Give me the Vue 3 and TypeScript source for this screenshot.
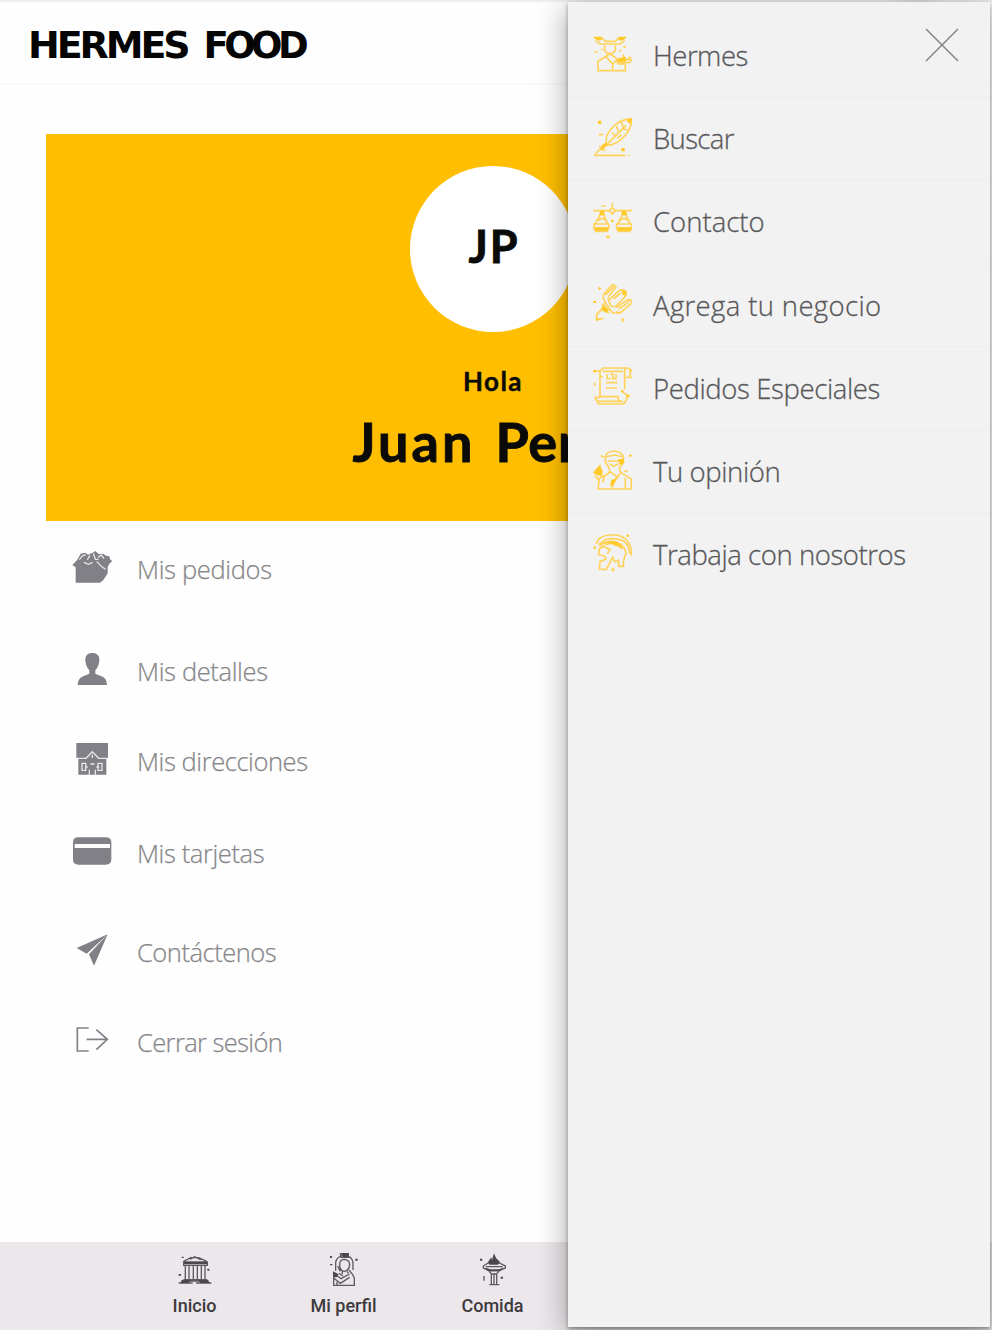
<script setup lang="ts">
import { ref } from 'vue';

interface Icono {
  caja: string
  linea?: string
  relleno?: string
  claro?: string
}

interface Opcion {
  nombre: string
  icono: Icono
  espacio?: string
}

const abierto = ref(true);

const menu: Opcion[] = [
  {
    nombre: 'Hermes',
    espacio: '-0.5px',
    icono: {
      caja: '36 42 120 120',
      linea: 'M42 54H66L76 64H106L116 54H138M46 62L62 72H120L134 62M58 72H122M74 76V92L82 100H96L106 92V76M90 100L80 108L54 124V152H136V132M78 110L98 132V152M98 132L112 118M90 102L108 114L120 130M108 118L128 126L154 112M122 128H148L156 118M106 120L116 132H134M130 80L138 82M44 96H54M64 88L68 90M118 92H124M128 104L136 114M146 110L150 122',
      relleno: 'M40 50H64L66 56L60 62L50 60ZM140 50H118L114 56L120 62L130 60ZM112 116L132 110L140 117L136 124L118 126Z'
    }
  },
  {
    nombre: 'Buscar',
    espacio: '-0.65px',
    icono: {
      caja: '36 297 120 120',
      linea: 'M42 412H136M144 412H148M46 408L80 374M80 378Q72 350 104 322Q124 304 156 302Q154 332 136 352Q112 382 80 382M80 380L138 322M58 384L66 394L76 398M56 350H70M96 344L106 352M112 362L124 350M124 312L132 334L146 336M110 324L114 340',
      relleno: 'M54 308H64V318H54ZM124 390H134V400H124ZM66 380L78 374L82 382L62 400ZM142 303H157L152 318L142 312Z'
    }
  },
  {
    nombre: 'Contacto',
    icono: {
      caja: '36 540 120 120',
      linea: 'M40 572H88M106 572H156M97 548V563M97 563L106 572L97 582L88 572ZM66 574L44 614M66 574L84 614M132 574L112 614M132 574L152 614M42 612H86V626L80 634H48L42 626ZM110 612H154V626L148 634H116L110 626ZM54 602Q66 590 78 602M120 602Q132 590 144 602M48 624H80M116 624H148M64 558H76M78 650H90M84 646V656',
      relleno: 'M92 603L97 598L102 603L97 608ZM60 572H72L74 586H58ZM126 572H138L142 586H124ZM44 622H84V632H46ZM112 622H154V632H114Z'
    }
  },
  {
    nombre: 'Agrega tu negocio',
    espacio: '0.36px',
    icono: {
      caja: '36 44 120 120',
      linea: 'M68 82L94 52Q102 46 108 56L84 86M88 94L116 68Q128 60 138 70Q142 78 134 86L106 116M108 118L144 94Q156 94 156 104L120 134L108 130M68 84L80 110L98 134L124 134M76 80L102 54M100 92L122 74M116 122L148 100M72 104L66 124L88 134M68 120L50 138V156M50 154L70 150M84 90L92 112L104 116M124 154H132M128 150V162',
      relleno: 'M54 60L59 55L64 60L59 65ZM40 98H48V104H40ZM68 106L88 126L78 134L66 124ZM124 68L138 68L136 82L128 80ZM48 148L58 154L50 158Z'
    }
  },
  {
    nombre: 'Pedidos Especiales',
    espacio: '-0.37px',
    icono: {
      caja: '36 292 120 120',
      linea: 'M60 384V306L70 298H142Q158 302 158 314V326H138M138 298Q132 302 134 314V362M40 307H60M68 308H128M60 322L68 326M78 342H112M78 358H112M80 316L82 330H92M90 316H98V330H108V316M60 384H114Q112 398 128 398H54Q46 396 46 386H60M54 406H128Q140 402 140 386L146 382L134 374L124 368M54 398V406M44 342V352M150 304V322',
      relleno: 'M124 364H130V370H124ZM140 378H148V386H140ZM40 304H48V311H40Z'
    }
  },
  {
    nombre: 'Tu opinión',
    espacio: '-0.4px',
    icono: {
      caja: '36 543 120 120',
      linea: 'M76 564Q78 548 102 546Q126 548 130 564L104 558ZM76 564V580L86 594L90 608L82 616L58 628L54 660H154V630L122 610L118 596L130 582V564M82 576H124M88 584L100 592L116 584M62 588L50 600L42 610L58 620M90 608L110 622L94 660M122 612L110 628L98 636M136 626V660M132 606H144M62 560L72 564M74 620L68 640M44 620L56 632',
      relleno: 'M60 590L68 606L66 622L42 614L50 600ZM114 570H132V582L120 588ZM94 632L110 630L100 648L90 652ZM146 560L151 555L156 560L151 565Z'
    }
  },
  {
    nombre: 'Trabaja con nosotros',
    espacio: '-0.43px',
    icono: {
      caja: '36 790 120 120',
      linea: 'M48 824Q56 798 88 796H112Q142 804 152 832L156 856L148 848Q148 826 130 814Q108 804 80 808L56 824M58 830Q78 812 100 816Q134 820 138 850L130 876V890H116V872L104 876L98 862L86 886L78 900L58 898L60 876L78 868L74 860L56 854L58 838L70 830L90 840L82 852M74 824L106 820L128 838M98 824L120 830M50 818L60 804M98 894V906M94 900H104',
      relleno: 'M39 834L44 829L49 834L44 839ZM138 798L143 793L148 798L143 803ZM78 818L102 813L122 826L128 836L104 824Z'
    }
  }
];

const perfil: Opcion[] = [
  {
    nombre: 'Mis pedidos',
    espacio: '-0.33px',
    icono: {
      caja: '96 111 120 120',
      relleno: 'M97 165L112 149L122 131L136 128L144 134L158 128L166 123L176 132L190 131L198 137L208 139L211 149L217 153L208 161L203 171V190L190 210L180 218H107V172Z',
      claro: 'M118 149L128 137L137 135M142 149L150 136M160 130L166 148L176 148M174 142L184 135L192 146M132 157L145 163L158 157M170 154L184 169L196 178'
    }
  },
  {
    nombre: 'Mis detalles',
    espacio: '-0.35px',
    icono: {
      caja: '96 417 120 120',
      relleno: 'M157 429Q176 429 178 446Q179 466 166 481V491L188 500Q200 505 201 525H113Q114 506 126 500L148 491V481Q135 466 136 446Q138 429 157 429Z'
    }
  },
  {
    nombre: 'Mis direcciones',
    espacio: '-0.43px',
    icono: {
      caja: '96 56 120 120',
      relleno: 'M109 68H204V114L199 117V163H115V116L109 112Z',
      claro: 'M109 114H138L157 94L176 114H204M126 129H137V150H126ZM174 129H186V150H174ZM151 131H164M148 148V163M166 148V163M157 103V113M135 140H143M169 140H178'
    }
  },
  {
    nombre: 'Mis tarjetas',
    espacio: '-0.4px',
    icono: {
      caja: '96 331 120 120',
      relleno: 'M115 350H197Q214 350 214 365V416Q214 432 197 432H115Q99 432 99 416V365Q99 350 115 350ZM104 370V382H210V370Z'
    }
  },
  {
    nombre: 'Contáctenos',
    espacio: '-0.47px',
    icono: {
      caja: '96 61 120 120',
      relleno: 'M203 74L110 115L140 132ZM203 74L147 134L162 168Z'
    }
  },
  {
    nombre: 'Cerrar sesión',
    espacio: '-0.62px',
    icono: {
      caja: '96 331 120 120',
      linea: 'M146 355H112V424H146M140 389H202M169 360L202 389L169 420'
    }
  }
];

const barra: Opcion[] = [
  {
    nombre: 'Inicio',
    icono: {
      caja: '86 66 102 102',
      linea: 'M103 94L124 83H148L172 94M103 96V106H174V96ZM108 107V148M119 107V148M132 107V148M144 107V148M156 107V148M167 107V148M102 149H174M96 153H178M88 159H130M140 159H186M122 88L136 80L152 88',
      relleno: 'M104 96H173V103H104ZM97 80H103V84H97ZM88 132H95V137H88ZM174 116H180V122H174ZM98 150H124L118 159H94ZM148 150H174L182 159H152Z'
    }
  },
  {
    nombre: 'Mi perfil',
    icono: {
      caja: '532 66 102 102',
      linea: 'M558 122V96Q562 78 584 76Q608 78 610 98V120M570 104Q570 88 584 88Q600 90 600 104Q598 122 584 124Q570 122 570 104M564 108L572 124M598 120L608 132L614 144V166H552V126M552 128L574 146L600 132M552 144L572 160L600 142M568 130L580 138M562 166V150M572 72H596V82H574ZM578 124V132M592 124L596 130',
      relleno: 'M574 69H598L592 82H580ZM541 78H547V84H541ZM617 86H624V92H617ZM541 102H548V106H541ZM550 124L566 132L562 142H550Z'
    }
  },
  {
    nombre: 'Comida',
    icono: {
      caja: '980 66 102 102',
      linea: 'M1002 108L1018 98H1048L1068 108V114L1050 122H1018L1002 114ZM1010 110H1060M1020 124L1026 132H1042L1048 124M1026 132V162M1034 132V162M1042 132V162M1020 164H1050M1004 138V152',
      relleno: 'M1034 70L1040 84L1052 96L1046 104H1020L1016 96L1026 82L1028 90ZM992 86H999V92H992ZM1054 140H1061V146H1054ZM1006 112L1022 118H1050L1064 112L1052 124H1016Z'
    }
  }
];
</script>

<template>
  <div class="pagina">
    <header class="cabecera">
      <h1 class="logo"><span class="hermes">HERMES</span> <span class="food">FOOD</span></h1>
    </header>

    <main class="contenido">
      <section class="tarjeta">
        <div class="avatar">JP</div>
        <p class="saludo">Hola</p>
        <h2 class="nombre"><span class="pila">Juan</span> <span class="apellido">Perez</span></h2>
      </section>

      <ul class="lista">
        <li v-for="item in perfil" :key="item.nombre">
          <svg :viewBox="item.icono.caja">
            <path class="relleno" fill-rule="evenodd" :d="item.icono.relleno" />
            <path class="claro" :d="item.icono.claro" />
            <path class="linea" :d="item.icono.linea" />
          </svg>
          <span :style="{ letterSpacing: item.espacio }">{{ item.nombre }}</span>
        </li>
      </ul>
    </main>

    <nav class="barra">
      <a v-for="item in barra" :key="item.nombre">
        <svg :viewBox="item.icono.caja">
          <path class="linea" :d="item.icono.linea" />
          <path class="relleno" :d="item.icono.relleno" />
        </svg>
        <span>{{ item.nombre }}</span>
      </a>
    </nav>

    <aside v-if="abierto" class="cajon">
      <ul class="menu">
        <li v-for="item in menu" :key="item.nombre">
          <svg :viewBox="item.icono.caja">
            <path class="linea" :d="item.icono.linea" />
            <path class="relleno" :d="item.icono.relleno" />
          </svg>
          <span :style="{ letterSpacing: item.espacio }">{{ item.nombre }}</span>
        </li>
      </ul>
      <button class="cerrar" @click="abierto = false">
        <svg viewBox="0 0 34 34">
          <path d="M1 1L33 33M33 1L1 33" />
        </svg>
      </button>
    </aside>
    <div class="sombra"></div>
  </div>
</template>

<style>
body {
  margin: 0;
  background: #fff;
}
</style>

<style scoped>
.pagina {
  position: relative;
  display: flex;
  flex-direction: column;
  width: 992px;
  height: 1330px;
  overflow: hidden;
  background: #fefefe;
  font-family: "Open Sans", "Noto Sans", sans-serif;
}

.cabecera {
  box-sizing: border-box;
  height: 85px;
  padding: 22px 28px 0;
  border-top: 2px solid #eee;
  border-bottom: 2px solid #fafafa;
}

.logo {
  display: flex;
  align-items: baseline;
  gap: 16px;
  margin: 0;
  font: 900 38px/42px "DejaVu Sans", sans-serif;
  color: #050505;
}

.hermes {
  letter-spacing: -3.1px;
}

.food {
  font-size: 37px;
  letter-spacing: -4.6px;
}

.contenido {
  flex: 1;
  padding: 49px 52px 0 46px;
}

.tarjeta {
  display: flex;
  flex-direction: column;
  align-items: center;
  box-sizing: border-box;
  height: 387px;
  padding-top: 32px;
  background: #ffbf00;
  color: #0a0a08;
  font-family: Lato, sans-serif;
  font-weight: 700;
}

.avatar {
  display: flex;
  align-items: center;
  justify-content: center;
  box-sizing: border-box;
  width: 166px;
  height: 166px;
  padding: 0 0 6px 2px;
  border-radius: 50%;
  background: #fff;
  font-size: 45px;
  letter-spacing: 2px;
  -webkit-text-stroke: .8px #0a0a08;
}

.saludo {
  margin: 32px 0 0;
  font-size: 26px;
  line-height: 34px;
  letter-spacing: 1.4px;
  -webkit-text-stroke: .4px #0a0a08;
}

.nombre {
  display: flex;
  gap: 20px;
  margin: 12px 0 0;
  font-size: 54px;
  line-height: 64px;
  -webkit-text-stroke: .9px #0a0a08;
}

.pila {
  letter-spacing: 3px;
}

.apellido {
  letter-spacing: .8px;
}

.lista {
  display: grid;
  grid-template-rows: 96px 108px 72px 112px 86px 94px;
  margin: 0;
  padding: 0 0 0 26px;
  list-style: none;
}

.lista li {
  display: flex;
  align-items: center;
  gap: 25px;
  color: #87878a;
  font-size: 25.5px;
  font-weight: 300;
  -webkit-text-stroke: .25px #87878a;
}

.lista svg {
  width: 40px;
  height: 40px;
  margin-bottom: 4px;
}

.lista .relleno {
  fill: #818086;
}

.lista .claro {
  fill: none;
  stroke: rgba(255, 255, 255, .8);
  stroke-width: 4;
}

.lista .linea {
  fill: none;
  stroke: #818086;
  stroke-width: 5;
}

.barra {
  display: flex;
  box-sizing: border-box;
  height: 88px;
  padding: 10px 0 0 120px;
  background: #ece7eb;
}

.barra a {
  display: flex;
  flex-direction: column;
  align-items: center;
  width: 149px;
  color: #3c3a3c;
  font: 500 18px/22px Roboto, sans-serif;
}

.barra svg {
  width: 34px;
  height: 34px;
  margin-bottom: 9px;
}

.barra .linea {
  fill: none;
  stroke: #5d5a5d;
  stroke-width: 4;
}

.barra .relleno {
  fill: #4b484b;
}

.cajon {
  position: absolute;
  top: 2px;
  left: 568px;
  box-sizing: border-box;
  width: 422px;
  height: 1325px;
  padding-top: 13px;
  background: #f2f2f2;
  box-shadow: 0 2px 4px rgba(0, 0, 0, .35), -2px 6px 28px rgba(0, 0, 0, .32);
}

.menu {
  margin: 0;
  padding: 0;
  list-style: none;
}

.menu li {
  display: flex;
  align-items: center;
  gap: 21px;
  box-sizing: border-box;
  height: 83.2px;
  padding-left: 24px;
  border-bottom: 2px solid #efeff0;
  color: #58585a;
  font-size: 27.5px;
  font-weight: 300;
  -webkit-text-stroke: .3px #58585a;
}

.menu li:last-child {
  border-bottom-color: transparent;
}

.menu svg {
  width: 40px;
  height: 40px;
  margin-bottom: 4px;
}

.menu .linea {
  fill: none;
  stroke: #ffd25a;
  stroke-width: 5;
}

.menu .relleno {
  fill: #ffc928;
}

.cerrar {
  position: absolute;
  top: 26px;
  right: 31px;
  padding: 0;
  border: 0;
  background: none;
  cursor: pointer;
}

.cerrar svg {
  display: block;
  width: 34px;
  height: 34px;
  fill: none;
  stroke: #848484;
  stroke-width: 1.5;
}

.sombra {
  position: absolute;
  top: -5px;
  left: 885px;
  width: 64px;
  height: 8px;
  border-radius: 50%;
  background: radial-gradient(closest-side, #bbb, rgba(210, 210, 210, 0));
}
</style>
